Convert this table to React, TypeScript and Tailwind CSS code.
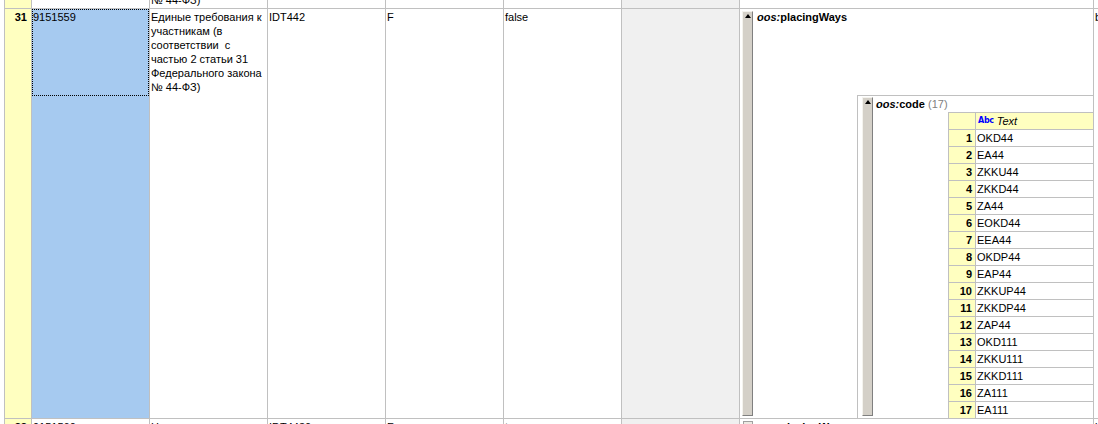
import React from "react";

const codes = [
  "OKD44",
  "EA44",
  "ZKKU44",
  "ZKKD44",
  "ZA44",
  "EOKD44",
  "EEA44",
  "OKDP44",
  "EAP44",
  "ZKKUP44",
  "ZKKDP44",
  "ZAP44",
  "OKD111",
  "ZKKU111",
  "ZKKD111",
  "ZA111",
  "EA111",
];

function Bar({ className }: { className: string }) {
  return (
    <div
      className={`w-[11px] shrink-0 flex flex-col items-center bg-[#D4D0C8] border-l border-t border-l-[#F4F3EE] border-t-[#F4F3EE] border-r border-b border-r-[#808080] border-b-[#808080] ${className}`}
    >
      <div className="mt-[2px] w-0 h-0 border-l-[3px] border-r-[3px] border-b-[4px] border-l-transparent border-r-transparent border-b-black" />
    </div>
  );
}

function Label({ name, count }: { name: string; count?: string }) {
  return (
    <span className="font-bold whitespace-nowrap">
      <i>oos:</i>
      {name}
      {count && <span className="font-normal text-[#808080]"> {count}</span>}
    </span>
  );
}

const cellBase = "shrink-0 border-r border-[#C0C0C0]";

export default function App() {
  return (
    <div className="w-[1098px] h-[424px] overflow-hidden bg-white text-black text-[11px] leading-[14px] font-['Liberation_Sans',Arial,sans-serif]">
      <div className="ml-[4px] w-[1400px] border-l border-[#C0C0C0]">
        {/* Row 30 (cut off at the top) */}
        <div className="flex h-[9px] border-b border-[#C0C0C0] overflow-hidden">
          <div className={`${cellBase} w-[27px] bg-[#FFFFC0]`} />
          <div className={`${cellBase} w-[118px]`} />
          <div className={`${cellBase} w-[118px] flex flex-col justify-end pb-[1px] pl-[1px]`}>
            <div className="h-[14px] whitespace-nowrap">№ 44-ФЗ)</div>
          </div>
          <div className={`${cellBase} w-[118px]`} />
          <div className={`${cellBase} w-[118px]`} />
          <div className={`${cellBase} w-[118px]`} />
          <div className={`${cellBase} w-[118px] bg-[#F0F0F0]`} />
          <div className={`${cellBase} w-[354px]`} />
          <div className={`${cellBase} w-[200px]`} />
        </div>

        {/* Row 31 */}
        <div className="flex h-[410px] border-b border-[#C0C0C0]">
          <div className={`${cellBase} w-[27px] bg-[#FFFFC0] text-right pr-[4px] pt-[1px] font-bold`}>31</div>
          <div className={`${cellBase} w-[118px] bg-[#A6CAF0] relative`}>
            <div className="absolute left-0 top-0 right-0 h-[87px] border border-dotted border-black" />
            <div className="pl-[1px] pt-[1px]">9151559</div>
          </div>
          <div className={`${cellBase} w-[118px] pl-[1px] pt-[1px] whitespace-pre`}>
            <div>Единые требования к</div>
            <div>участникам (в</div>
            <div>соответствии  с</div>
            <div>частью 2 статьи 31</div>
            <div>Федерального закона</div>
            <div>№ 44-ФЗ)</div>
          </div>
          <div className={`${cellBase} w-[118px] pl-[1px] pt-[1px]`}>IDT442</div>
          <div className={`${cellBase} w-[118px] pl-[1px] pt-[1px]`}>F</div>
          <div className={`${cellBase} w-[118px] pl-[1px] pt-[1px]`}>false</div>
          <div className={`${cellBase} w-[118px] bg-[#F0F0F0]`} />
          <div className={`${cellBase} w-[354px] flex`}>
            <Bar className="ml-[2px] mt-[2px] mb-[2px]" />
            <div className="ml-[3px] flex-1 flex flex-col">
              <div className="pl-[1px] pt-[1px] h-[15px]">
                <Label name="placingWays" />
              </div>
              <div className="mt-[71px] ml-[101px] flex-1 flex border-t border-l border-[#C0C0C0]">
                <Bar className="ml-[4px] mt-[1px] mb-[2px]" />
                <div className="ml-[3px] flex-1 flex flex-col">
                  <div className="mt-[1px] h-[14px]">
                    <Label name="code" count="(17)" />
                  </div>
                  <div className="mt-[1px] ml-[72px] border-t border-l border-[#C0C0C0]">
                    <div className="flex h-[17px] border-b border-[#C0C0C0] bg-[#FFFFC0] leading-[16px]">
                      <div className="w-[27px] border-r border-[#C0C0C0]" />
                      <div className="flex-1 pl-[2px] flex items-center gap-[3px]">
                        <span className="text-[8px] leading-[10px] font-bold text-[#0000FF] tracking-[-0.3px] font-['DejaVu_Sans',sans-serif]">Abc</span>
                        <i>Text</i>
                      </div>
                    </div>
                    {codes.map((c, i) => (
                      <div
                        key={c}
                        className={`flex leading-[16px] ${i === codes.length - 1 ? "h-[16px]" : "h-[17px] border-b border-[#C0C0C0]"}`}
                      >
                        <div className="w-[27px] border-r border-[#C0C0C0] bg-[#FFFFC0] text-right pr-[3px] font-bold">
                          {i + 1}
                        </div>
                        <div className="flex-1 pl-[1px]">{c}</div>
                      </div>
                    ))}
                  </div>
                </div>
              </div>
            </div>
          </div>
          <div className={`${cellBase} w-[200px] pl-[1px] pt-[1px]`}>b</div>
        </div>

        {/* Row 32 (cut off at the bottom) */}
        <div className="flex h-[30px] border-b border-[#C0C0C0]">
          <div className={`${cellBase} w-[27px] bg-[#FFFFC0] text-right pr-[4px] pt-[1px] font-bold`}>32</div>
          <div className={`${cellBase} w-[118px] pl-[1px] pt-[1px]`}>9151560</div>
          <div className={`${cellBase} w-[118px] pl-[1px] pt-[1px]`}>Не установлено</div>
          <div className={`${cellBase} w-[118px] pl-[1px] pt-[1px]`}>IDT4430</div>
          <div className={`${cellBase} w-[118px] pl-[1px] pt-[1px]`}>F</div>
          <div className={`${cellBase} w-[118px] pl-[1px] pt-[1px]`}>true</div>
          <div className={`${cellBase} w-[118px] bg-[#F0F0F0]`} />
          <div className={`${cellBase} w-[354px] flex`}>
            <div className="ml-[3px] mt-[2px] w-[10px] h-[10px] border border-[#A0A0A0] bg-[#ECE9E2]" />
            <div className="ml-[4px] pt-[1px]">
              <Label name="placingWays" />
            </div>
          </div>
          <div className={`${cellBase} w-[200px] pl-[1px] pt-[1px]`}>b</div>
        </div>
      </div>
    </div>
  );
}
